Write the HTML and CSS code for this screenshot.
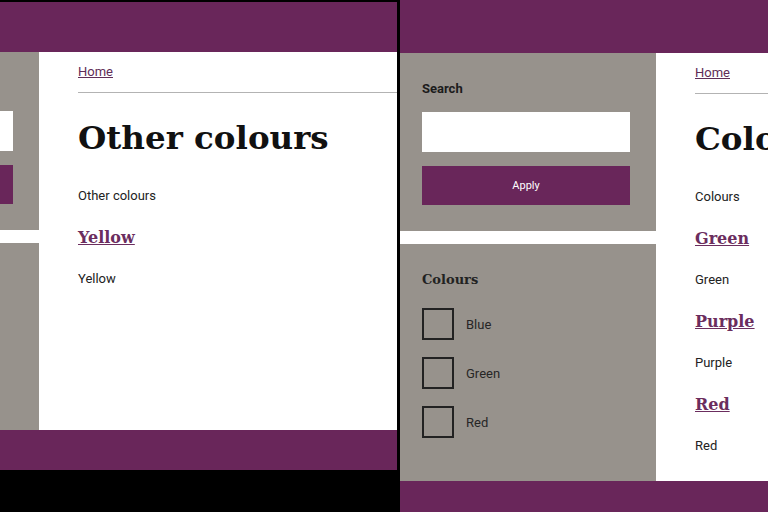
FILE: index.html
```html
<!DOCTYPE html>
<html lang="en">
<head>
<meta charset="utf-8">
<title>Colours</title>
<link rel="stylesheet" href="styles.css">
</head>
<body>
<div class="screens">
  <div class="frame frame--left">
    <div class="page page--left">
      <header class="site-header"></header>
      <div class="layout">
        <aside class="sidebar">
          <div class="block block--search">
            <label class="label">Search</label>
            <div class="input"></div>
            <button class="btn">Apply</button>
          </div>
          <div class="block block--facets">
            <h3 class="facet-title">Colours</h3>
            <ul class="facet-list">
              <li class="facet"><span class="box"></span><span class="facet-label">Yellow</span></li>
            </ul>
          </div>
        </aside>
        <main class="main">
          <nav class="breadcrumb"><a href="#" class="crumb">Home</a></nav>
          <h1 class="title">Other colours</h1>
          <p class="text">Other colours</p>
          <h2 class="item-title"><a href="#">Yellow</a></h2>
          <p class="text text--item">Yellow</p>
        </main>
      </div>
      <footer class="site-footer"></footer>
    </div>
  </div>
  <div class="sep"></div>
  <div class="frame frame--right">
    <div class="page">
      <header class="site-header"></header>
      <div class="layout">
        <aside class="sidebar">
          <div class="block block--search">
            <label class="label">Search</label>
            <div class="input"></div>
            <button class="btn">Apply</button>
          </div>
          <div class="block block--facets">
            <h3 class="facet-title">Colours</h3>
            <ul class="facet-list">
              <li class="facet"><span class="box"></span><span class="facet-label">Blue</span></li>
              <li class="facet"><span class="box"></span><span class="facet-label">Green</span></li>
              <li class="facet"><span class="box"></span><span class="facet-label">Red</span></li>
            </ul>
          </div>
        </aside>
        <main class="main">
          <nav class="breadcrumb"><a href="#" class="crumb">Home</a></nav>
          <h1 class="title">Colours</h1>
          <p class="text">Colours</p>
          <h2 class="item-title"><a href="#">Green</a></h2>
          <p class="text text--item">Green</p>
          <h2 class="item-title"><a href="#">Purple</a></h2>
          <p class="text text--item">Purple</p>
          <h2 class="item-title"><a href="#">Red</a></h2>
          <p class="text text--item">Red</p>
        </main>
      </div>
      <footer class="site-footer"></footer>
    </div>
  </div>
</div>
</body>
</html>
```

FILE: styles.css
```css
* { box-sizing: border-box; }

html, body {
  margin: 0;
  padding: 0;
  background: #000;
}

body {
  font-family: Roboto, "Liberation Sans", sans-serif;
  color: #222;
}

.screens {
  display: flex;
  width: 768px;
  height: 512px;
  overflow: hidden;
  background: #000;
}

.frame {
  overflow: hidden;
  height: 512px;
  background: #000;
}

.frame--left {
  width: 397px;
  flex-shrink: 0;
  padding-top: 2px;
}

.sep {
  width: 3px;
  flex-shrink: 0;
  background: #000;
}

.frame--right {
  flex: 1;
  min-width: 0;
}

.page {
  width: 1000px;
  display: flex;
  flex-direction: column;
}

.page--left {
  margin-left: -217px;
}

.site-header {
  height: 53px;
  background: #69265a;
}

.page--left .site-header {
  height: 50px;
}

.site-footer {
  height: 40px;
  background: #69265a;
}

.layout {
  display: flex;
  align-items: stretch;
}

.sidebar {
  width: 256px;
  flex-shrink: 0;
  display: flex;
  flex-direction: column;
  gap: 13px;
  background: #fff;
}

.block {
  background: #97928c;
  padding: 26px 26px 26px 22px;
}

.block--facets {
  flex: 1;
  padding-top: 26px;
}

.label {
  display: block;
  font-weight: 700;
  font-size: 13px;
  line-height: 20px;
  color: #1c1c1c;
  margin-bottom: 13px;
}

.input {
  width: 208px;
  height: 40px;
  background: #fff;
}

.btn {
  display: block;
  margin-top: 14px;
  width: 208px;
  height: 39px;
  border: none;
  background: #69265a;
  color: #fff;
  font-family: Roboto, "Liberation Sans", sans-serif;
  font-size: 11px;
  padding: 0;
}

.facet-title {
  margin: 0;
  font-family: "DejaVu Serif", serif;
  font-weight: 700;
  font-size: 13px;
  line-height: 20px;
  color: #222;
}

.facet-list {
  list-style: none;
  margin: 18px 0 0;
  padding: 0;
  display: flex;
  flex-direction: column;
  gap: 17px;
}

.facet {
  display: flex;
  align-items: center;
  gap: 12px;
  height: 32px;
}

.box {
  width: 32px;
  height: 32px;
  border: 2px solid #222;
}

.facet-label {
  font-size: 13px;
  color: #262626;
}

.main {
  flex: 1;
  background: #fff;
  padding: 9px 39px 25px;
}

.page--left .main {
  min-height: 378px;
}

.breadcrumb {
  padding-bottom: 10px;
  border-bottom: 1px solid #b3b3b3;
  line-height: 20px;
}

.crumb {
  font-size: 13px;
  color: #5f2d57;
  text-decoration: underline;
}

.title {
  margin: 25px 0 0;
  font-family: "DejaVu Serif", serif;
  font-weight: 700;
  font-size: 32.5px;
  line-height: 40px;
  color: #111;
}

.text {
  margin: 28px 0 0;
  font-size: 13px;
  line-height: 20px;
  color: #222;
}

.text--item {
  margin-top: 17px;
}

.item-title {
  margin: 18px 0 0;
  font-family: "DejaVu Serif", serif;
  font-weight: 700;
  font-size: 16px;
  line-height: 28px;
}

.item-title a {
  color: #6b2d5e;
  text-decoration: underline;
}
```
